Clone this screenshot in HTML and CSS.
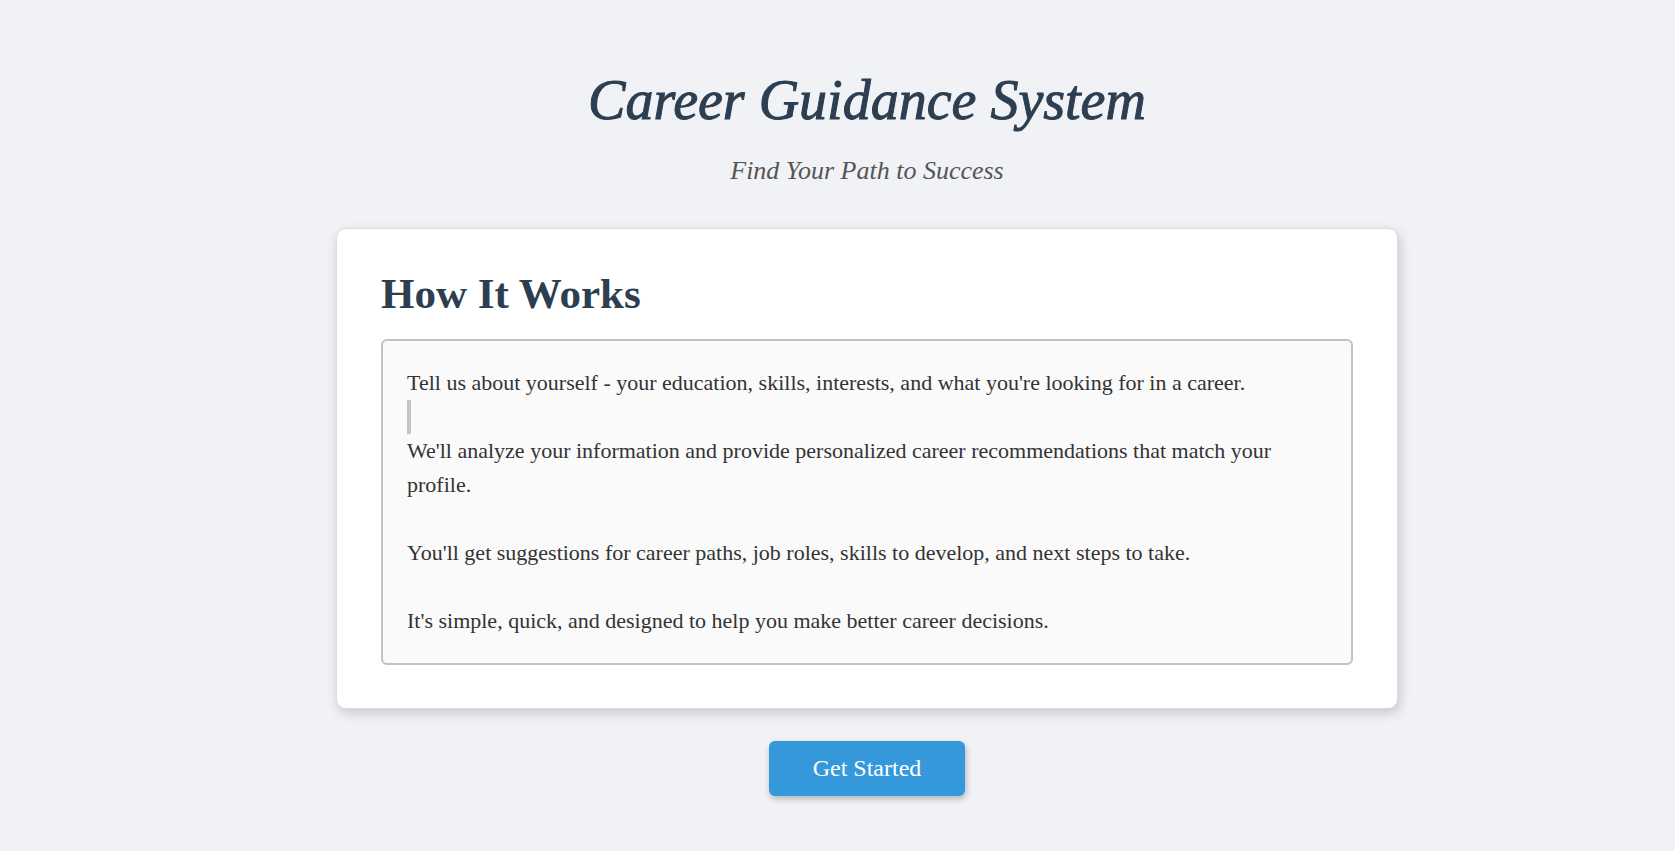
FILE: index.html
```html
<!DOCTYPE html>
<html lang="en">
<head>
<meta charset="utf-8">
<meta name="viewport" content="width=device-width, initial-scale=1">
<title>Career Guidance System</title>
<link rel="stylesheet" href="styles.css">
</head>
<body>
<main class="page">
  <header class="header">
    <h1 class="title">Career Guidance System</h1>
    <p class="tagline">Find Your Path to Success</p>
  </header>
  <section class="card">
    <h2 class="card-title">How It Works</h2>
    <div class="steps">
      <p class="step">Tell us about yourself - your education, skills, interests, and what you're looking for in a career.</p>
      <div class="cursor"></div>
      <p class="step step-spaced">We'll analyze your information and provide personalized career recommendations that match your profile.</p>
      <p class="step step-spaced">You'll get suggestions for career paths, job roles, skills to develop, and next steps to take.</p>
      <p class="step">It's simple, quick, and designed to help you make better career decisions.</p>
    </div>
  </section>
  <button class="start" type="button">Get Started</button>
</main>
</body>
</html>
```
FILE: styles.css
```css
* {
  box-sizing: border-box;
}

body {
  margin: 0;
  background: #f0f2f6;
  color: #333;
  font-family: "Liberation Serif", serif;
}

.page {
  display: flex;
  flex-direction: column;
  align-items: center;
  padding: 58px 0 54px 59px;
}

.header {
  text-align: center;
}

.title {
  margin: 0;
  color: #2c3e50;
  font-size: 56px;
  font-style: italic;
  font-weight: 400;
  line-height: 84px;
  -webkit-text-stroke: 1px #2c3e50;
}

.tagline {
  margin: 12px 0 40px;
  color: #555;
  font-size: 26px;
  font-style: italic;
  line-height: 34px;
}

.card {
  width: 100%;
  max-width: 1062px;
  padding: 41px 44px 43px;
  border: 1px solid #ddd;
  border-radius: 10px;
  background: #fff;
  box-shadow: 2px 4px 12px rgba(0, 0, 0, 0.18);
}

.card-title {
  margin: 0 0 21px;
  color: #2c3e50;
  font-size: 43px;
  font-weight: 700;
  line-height: 48px;
}

.steps {
  padding: 25px 24px;
  border: 2px solid #bdc3c7;
  border-radius: 6px;
  background: #fafafa;
}

.step {
  margin: 0;
  font-size: 22px;
  line-height: 34px;
}

.step-spaced {
  margin-bottom: 34px;
}

.cursor {
  width: 4px;
  height: 34px;
  background: #c6c6c6;
}

.start {
  margin-top: 32px;
  padding: 12px 44px;
  border: 0;
  border-radius: 6px;
  background: #3498db;
  box-shadow: 1px 3px 6px rgba(0, 0, 0, 0.25);
  color: #fff;
  font-family: inherit;
  font-size: 24px;
  line-height: 31px;
  cursor: pointer;
}
```
